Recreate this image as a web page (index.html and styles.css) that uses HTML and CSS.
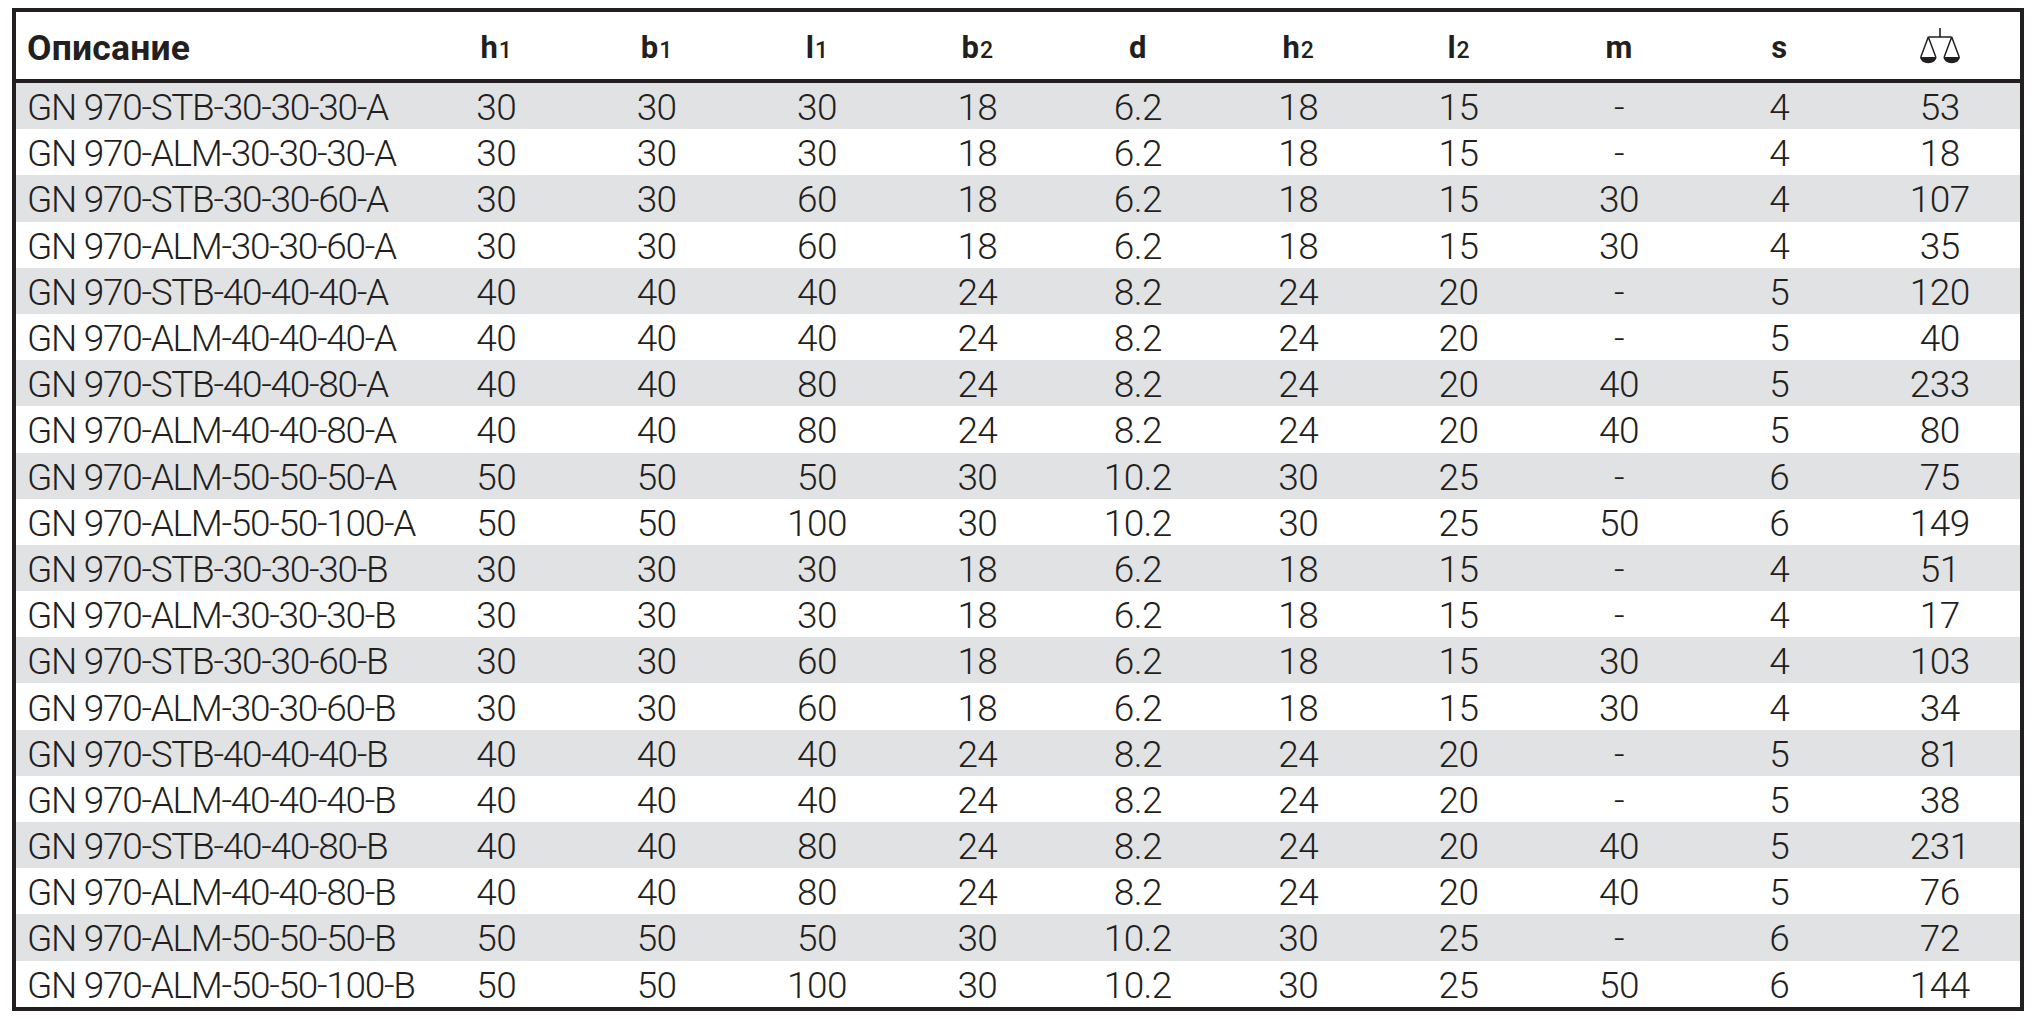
FILE: index.html
```html
<!DOCTYPE html>
<html lang="ru">
<head>
<meta charset="utf-8">
<title>GN 970</title>
<link rel="stylesheet" href="styles.css">
</head>
<body>
<div class="sheet">
<table class="spec">
<colgroup><col class="c-desc"><col><col><col><col><col><col><col><col><col><col></colgroup>
<thead>
<tr>
<th class="desc">Описание</th>
<th>h<span class="idx">1</span></th>
<th>b<span class="idx">1</span></th>
<th>l<span class="idx">1</span></th>
<th>b<span class="idx">2</span></th>
<th>d</th>
<th>h<span class="idx">2</span></th>
<th>l<span class="idx">2</span></th>
<th>m</th>
<th>s</th>
<th class="icon"><svg class="scale" viewBox="0 0 42 36" width="42" height="36" aria-label="вес"><path d="M21 0V9M9.3 9H32.7" fill="none" stroke="#231f20" stroke-width="1.6"/><path d="M9.3 9L1.8 29M9.3 9L16.8 29M32.7 9L25.2 29M32.7 9L40.2 29" fill="none" stroke="#231f20" stroke-width="1.5"/><path d="M1 29H17.6A8.3 6.2 0 0 1 1 29Z M24.4 29H41A8.3 6.2 0 0 1 24.4 29Z" fill="#231f20"/></svg></th>
</tr>
</thead>
<tbody>
<tr><td class="desc">GN 970-STB-30-30-30-A</td><td>30</td><td>30</td><td>30</td><td>18</td><td>6.2</td><td>18</td><td>15</td><td>-</td><td>4</td><td>53</td></tr>
<tr><td class="desc">GN 970-ALM-30-30-30-A</td><td>30</td><td>30</td><td>30</td><td>18</td><td>6.2</td><td>18</td><td>15</td><td>-</td><td>4</td><td>18</td></tr>
<tr><td class="desc">GN 970-STB-30-30-60-A</td><td>30</td><td>30</td><td>60</td><td>18</td><td>6.2</td><td>18</td><td>15</td><td>30</td><td>4</td><td>107</td></tr>
<tr><td class="desc">GN 970-ALM-30-30-60-A</td><td>30</td><td>30</td><td>60</td><td>18</td><td>6.2</td><td>18</td><td>15</td><td>30</td><td>4</td><td>35</td></tr>
<tr><td class="desc">GN 970-STB-40-40-40-A</td><td>40</td><td>40</td><td>40</td><td>24</td><td>8.2</td><td>24</td><td>20</td><td>-</td><td>5</td><td>120</td></tr>
<tr><td class="desc">GN 970-ALM-40-40-40-A</td><td>40</td><td>40</td><td>40</td><td>24</td><td>8.2</td><td>24</td><td>20</td><td>-</td><td>5</td><td>40</td></tr>
<tr><td class="desc">GN 970-STB-40-40-80-A</td><td>40</td><td>40</td><td>80</td><td>24</td><td>8.2</td><td>24</td><td>20</td><td>40</td><td>5</td><td>233</td></tr>
<tr><td class="desc">GN 970-ALM-40-40-80-A</td><td>40</td><td>40</td><td>80</td><td>24</td><td>8.2</td><td>24</td><td>20</td><td>40</td><td>5</td><td>80</td></tr>
<tr><td class="desc">GN 970-ALM-50-50-50-A</td><td>50</td><td>50</td><td>50</td><td>30</td><td>10.2</td><td>30</td><td>25</td><td>-</td><td>6</td><td>75</td></tr>
<tr><td class="desc">GN 970-ALM-50-50-100-A</td><td>50</td><td>50</td><td>100</td><td>30</td><td>10.2</td><td>30</td><td>25</td><td>50</td><td>6</td><td>149</td></tr>
<tr><td class="desc">GN 970-STB-30-30-30-B</td><td>30</td><td>30</td><td>30</td><td>18</td><td>6.2</td><td>18</td><td>15</td><td>-</td><td>4</td><td>51</td></tr>
<tr><td class="desc">GN 970-ALM-30-30-30-B</td><td>30</td><td>30</td><td>30</td><td>18</td><td>6.2</td><td>18</td><td>15</td><td>-</td><td>4</td><td>17</td></tr>
<tr><td class="desc">GN 970-STB-30-30-60-B</td><td>30</td><td>30</td><td>60</td><td>18</td><td>6.2</td><td>18</td><td>15</td><td>30</td><td>4</td><td>103</td></tr>
<tr><td class="desc">GN 970-ALM-30-30-60-B</td><td>30</td><td>30</td><td>60</td><td>18</td><td>6.2</td><td>18</td><td>15</td><td>30</td><td>4</td><td>34</td></tr>
<tr><td class="desc">GN 970-STB-40-40-40-B</td><td>40</td><td>40</td><td>40</td><td>24</td><td>8.2</td><td>24</td><td>20</td><td>-</td><td>5</td><td>81</td></tr>
<tr><td class="desc">GN 970-ALM-40-40-40-B</td><td>40</td><td>40</td><td>40</td><td>24</td><td>8.2</td><td>24</td><td>20</td><td>-</td><td>5</td><td>38</td></tr>
<tr><td class="desc">GN 970-STB-40-40-80-B</td><td>40</td><td>40</td><td>80</td><td>24</td><td>8.2</td><td>24</td><td>20</td><td>40</td><td>5</td><td>231</td></tr>
<tr><td class="desc">GN 970-ALM-40-40-80-B</td><td>40</td><td>40</td><td>80</td><td>24</td><td>8.2</td><td>24</td><td>20</td><td>40</td><td>5</td><td>76</td></tr>
<tr><td class="desc">GN 970-ALM-50-50-50-B</td><td>50</td><td>50</td><td>50</td><td>30</td><td>10.2</td><td>30</td><td>25</td><td>-</td><td>6</td><td>72</td></tr>
<tr><td class="desc">GN 970-ALM-50-50-100-B</td><td>50</td><td>50</td><td>100</td><td>30</td><td>10.2</td><td>30</td><td>25</td><td>50</td><td>6</td><td>144</td></tr>
</tbody>
</table>
</div>
</body>
</html>
```

FILE: styles.css
```css
html, body {
  margin: 0;
  padding: 0;
  background: #ffffff;
}

body {
  font-family: Roboto, "Noto Sans", "Liberation Sans", sans-serif;
  color: #231f20;
}

.sheet {
  margin: 8px 0 0 12px;
  width: 2012px;
  box-sizing: border-box;
  border: 4px solid #231f20;
}

.spec {
  width: 100%;
  table-layout: fixed;
  border-collapse: separate;
  border-spacing: 0;
}

.c-desc {
  width: 400px;
}

.spec thead tr {
  height: 71px;
}

.spec th {
  padding: 3px 0 0;
  border-bottom: 4px solid #231f20;
  font-weight: 700;
  font-size: 31px;
  line-height: 1;
  text-align: center;
  vertical-align: middle;
  white-space: nowrap;
}

.spec th.icon {
  padding-top: 0;
}

.spec th.desc {
  padding-top: 6px;
  font-size: 35.5px;
  letter-spacing: 0.2px;
}

.idx {
  font-size: 23px;
  font-weight: 500;
  margin-left: 1px;
}

.scale {
  display: block;
  margin: 0 auto;
}

.spec tbody tr {
  height: 46.2px;
}

.spec tbody tr:nth-child(odd) {
  background: #e1e2e4;
}

.spec td {
  padding: 3px 0 0;
  font-weight: 300;
  font-size: 37px;
  line-height: 1;
  text-align: center;
  vertical-align: middle;
  white-space: nowrap;
  letter-spacing: -0.6px;
}

.spec .desc {
  text-align: left;
  padding-left: 11px;
}

.spec td.desc {
  letter-spacing: -1.3px;
}
```
